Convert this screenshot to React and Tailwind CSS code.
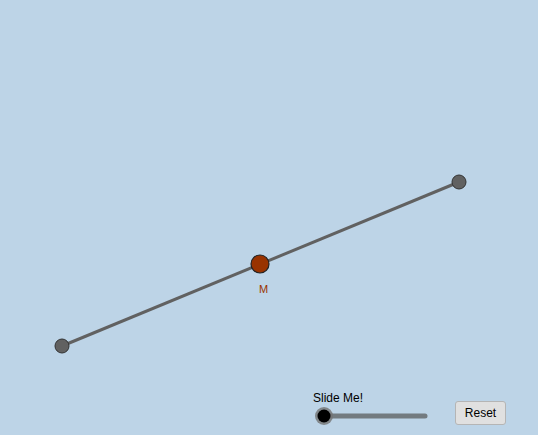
export default function App() {
  return (
    <div className="w-[540px] h-[437px] bg-white">
      <div className="relative w-[538px] h-[435px] bg-[#bdd4e7] overflow-hidden" style={{ fontFamily: '"Liberation Sans", Arial, sans-serif' }}>
        <svg className="absolute left-0 top-0" width="538" height="435">
          <line x1="62" y1="346" x2="459" y2="182" stroke="#616161" strokeWidth="3" />
          <circle cx="62" cy="346" r="7" fill="#616161" stroke="#333" strokeWidth="1" />
          <circle cx="459" cy="182" r="7" fill="#616161" stroke="#333" strokeWidth="1" />
          <circle cx="260" cy="264" r="9" fill="#993300" stroke="#222" strokeWidth="1.2" />
          <text x="259" y="293" fill="#993300" fontSize="11" fontFamily="Liberation Sans, Arial, sans-serif">M</text>
          <line x1="324" y1="416" x2="425" y2="416" stroke="#737b80" strokeWidth="5" strokeLinecap="round" />
          <circle cx="324" cy="416" r="9" fill="#737373" opacity="0.8" />
          <circle cx="324" cy="416" r="6.5" fill="#000" />
        </svg>
        <div className="absolute left-[313px] top-[392px] text-[12px] text-black leading-none">Slide Me!</div>
        <button className="absolute left-[455px] top-[401px] w-[51px] h-[24px] bg-[#e0e0e0] border border-[#b5b5b5] rounded-[3px] text-[12px] text-black flex items-center justify-center">Reset</button>
      </div>
    </div>
  );
}
